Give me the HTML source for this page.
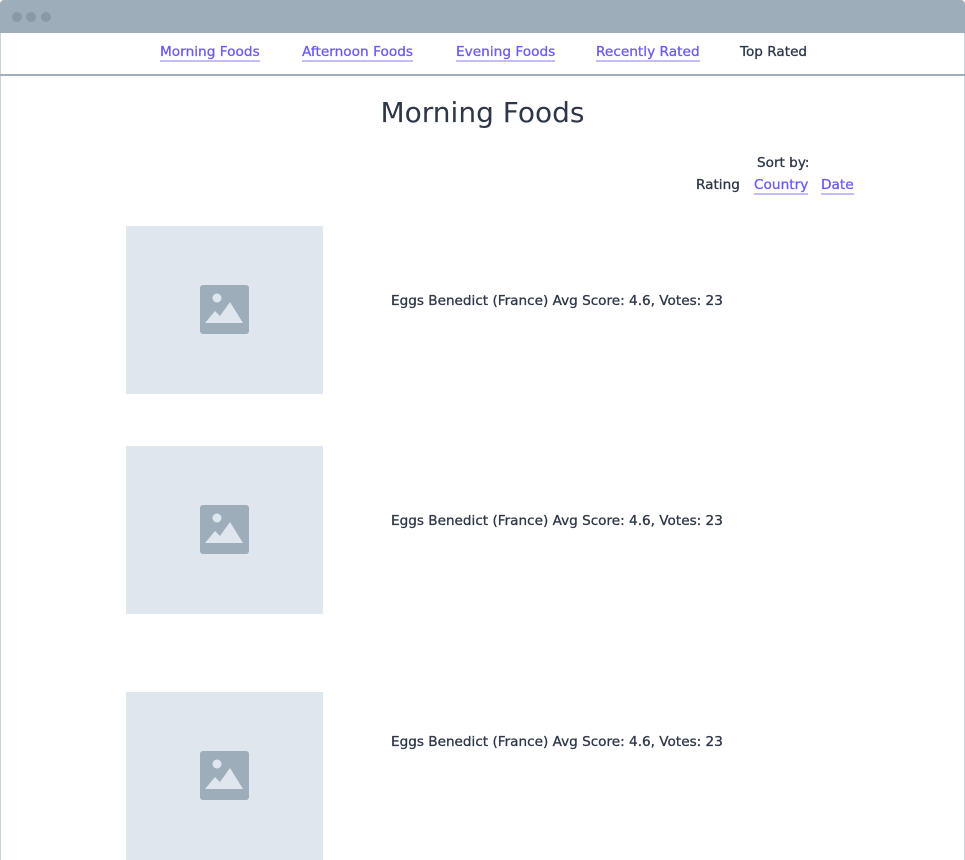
<!DOCTYPE html>
<html><head><style>
body{margin:0;width:965px;height:860px;overflow:hidden;background:#fff;font-family:"DejaVu Sans","Liberation Sans",sans-serif;color:#2d3748;position:relative}
.bar{position:absolute;left:0;top:0;width:965px;height:33px;background:#9eadba;border-radius:4px 4px 0 0}
.dot{position:absolute;top:12px;width:10px;height:10px;border-radius:50%;background:#8a99a8}
.frame{position:absolute;top:33px;left:0;width:963px;height:827px;border-left:1px solid #cbd2d9;border-right:1px solid #cbd2d9}
.nav{position:absolute;top:74px;left:0;width:965px;height:2px;background:#a0aec0}
a{color:#6b5cf6;text-decoration:none;border-bottom:2px solid #c4bdfb;position:absolute;font-size:13.7px;white-space:nowrap;-webkit-text-stroke:0.3px #6b5cf6}
.t{position:absolute;font-size:13.6px;white-space:nowrap;-webkit-text-stroke:0.3px #2d3748}
.img{position:absolute;left:126px;width:197px;height:168px;background:#e0e6ed}
.img svg{position:absolute;left:74px;top:59px}
</style></head><body>
<div class="bar"><div class="dot" style="left:12px"></div><div class="dot" style="left:26px"></div><div class="dot" style="left:41px"></div></div>
<div class="frame"></div>
<a style="left:160px;top:44px">Morning Foods</a>
<a style="left:302px;top:44px">Afternoon Foods</a>
<a style="left:456px;top:44px">Evening Foods</a>
<a style="left:596px;top:44px">Recently Rated</a>
<span class="t" style="left:740px;top:44px">Top Rated</span>
<div class="nav"></div>
<div class="t" style="left:0;width:965px;text-align:center;top:96px;font-size:28px;-webkit-text-stroke:0">Morning Foods</div>
<span class="t" style="left:757px;top:155px">Sort by:</span>
<span class="t" style="left:696px;top:177px">Rating</span>
<a style="left:754px;top:177px">Country</a>
<a style="left:821px;top:177px">Date</a>
<div class="img" style="top:226px"><svg width="49" height="49" viewBox="0 0 49 49"><rect width="49" height="49" rx="3" fill="#9eadba"/><circle cx="17" cy="13" r="4.5" fill="#e0e6ed"/><path d="M5 38L15 26L20 31L30 17L43 38Z" fill="#e0e6ed"/></svg></div>
<div class="t" style="left:391px;top:293px">Eggs Benedict (France) Avg Score: 4.6, Votes: 23</div>
<div class="img" style="top:446px"><svg width="49" height="49" viewBox="0 0 49 49"><rect width="49" height="49" rx="3" fill="#9eadba"/><circle cx="17" cy="13" r="4.5" fill="#e0e6ed"/><path d="M5 38L15 26L20 31L30 17L43 38Z" fill="#e0e6ed"/></svg></div>
<div class="t" style="left:391px;top:513px">Eggs Benedict (France) Avg Score: 4.6, Votes: 23</div>
<div class="img" style="top:692px"><svg width="49" height="49" viewBox="0 0 49 49"><rect width="49" height="49" rx="3" fill="#9eadba"/><circle cx="17" cy="13" r="4.5" fill="#e0e6ed"/><path d="M5 38L15 26L20 31L30 17L43 38Z" fill="#e0e6ed"/></svg></div>
<div class="t" style="left:391px;top:734px">Eggs Benedict (France) Avg Score: 4.6, Votes: 23</div>
</body></html>
